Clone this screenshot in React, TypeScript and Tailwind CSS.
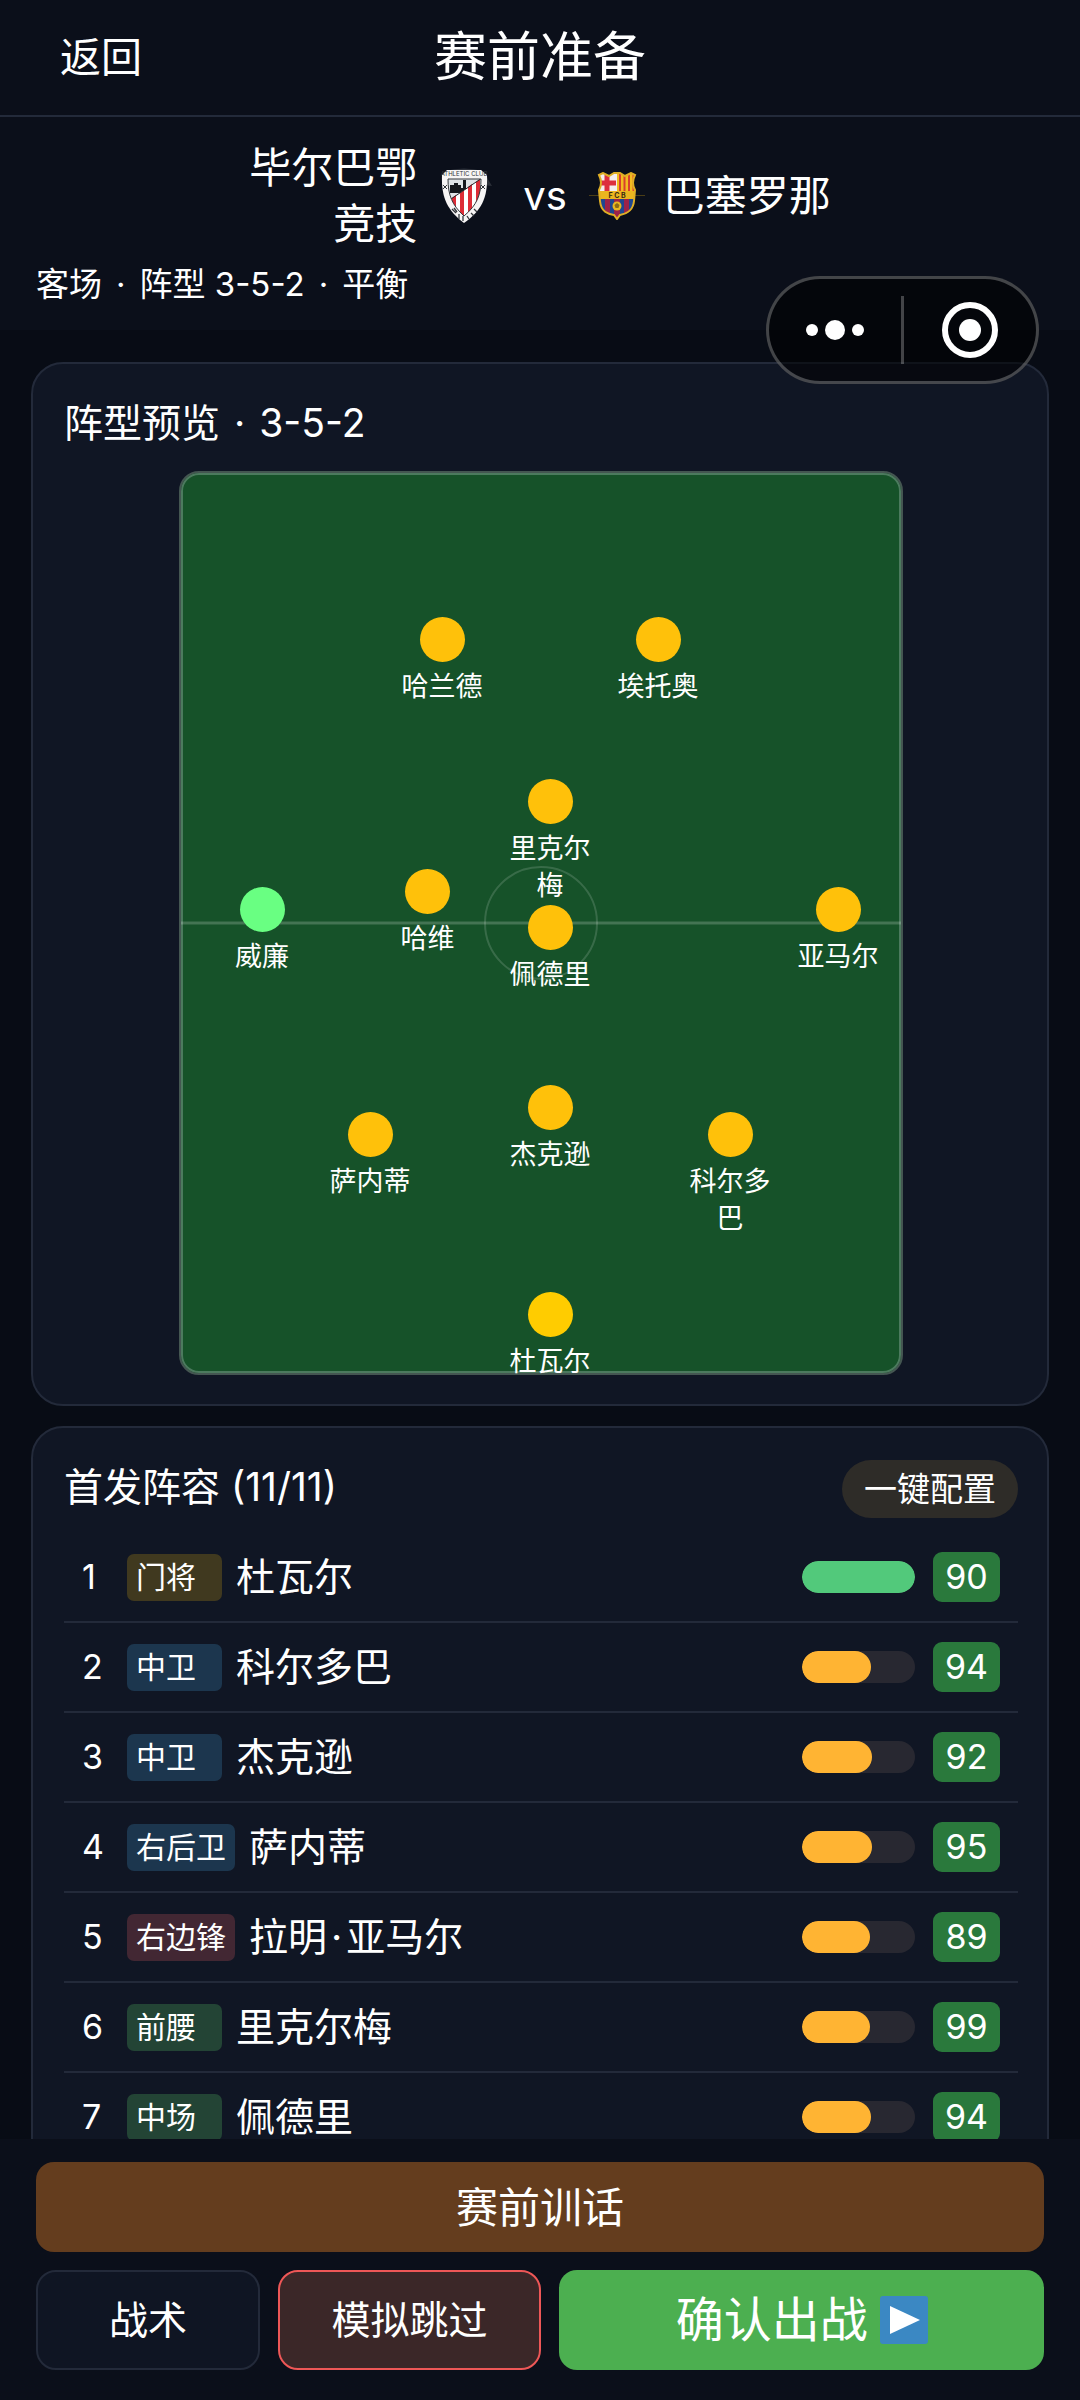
import { Fragment } from "react";

type Position = "gk" | "def" | "fwd" | "mid";

const FONT = "font-['Inter','Noto_Sans_CJK_SC',sans-serif]";

const markers = [
  { name: "哈兰德", x: 35, y: 20, color: "bg-[#ffc10a]" },
  { name: "埃托奥", x: 65, y: 20, color: "bg-[#ffc10a]" },
  { name: "里克尔梅", x: 50, y: 38, color: "bg-[#ffc10a]" },
  { name: "哈维", x: 33, y: 48, color: "bg-[#ffc10a]" },
  { name: "威廉", x: 10, y: 50, color: "bg-[#69ff82]" },
  { name: "亚马尔", x: 90, y: 50, color: "bg-[#ffc10a]" },
  { name: "佩德里", x: 50, y: 52, color: "bg-[#ffc10a]" },
  { name: "杰克逊", x: 50, y: 72, color: "bg-[#ffc10a]" },
  { name: "萨内蒂", x: 25, y: 75, color: "bg-[#ffc10a]" },
  { name: "科尔多巴", x: 75, y: 75, color: "bg-[#ffc10a]" },
  { name: "杜瓦尔", x: 50, y: 95, color: "bg-[#ffcc00]" },
];

const lineup: { pos: string; kind: Position; name: string; energy: number; rating: number }[] = [
  { pos: "门将", kind: "gk", name: "杜瓦尔", energy: 100, rating: 90 },
  { pos: "中卫", kind: "def", name: "科尔多巴", energy: 61, rating: 94 },
  { pos: "中卫", kind: "def", name: "杰克逊", energy: 62, rating: 92 },
  { pos: "右后卫", kind: "def", name: "萨内蒂", energy: 62, rating: 95 },
  { pos: "右边锋", kind: "fwd", name: "拉明·亚马尔", energy: 60, rating: 89 },
  { pos: "前腰", kind: "mid", name: "里克尔梅", energy: 60, rating: 99 },
  { pos: "中场", kind: "mid", name: "佩德里", energy: 61, rating: 94 },
];

const kindColor: Record<Position, string> = {
  gk: "bg-[#40391f]",
  def: "bg-[#1c364e]",
  fwd: "bg-[#422733]",
  mid: "bg-[#234435]",
};

function BilbaoCrest() {
  return (
    <svg viewBox="0 0 54 56" className="h-14 w-[54px] shrink-0" role="img" aria-label="Athletic Club">
      <defs>
        <clipPath id="bilbao-inner">
          <path d="M9 11H42C42 27 38 37 25 48C13 37 9 27 9 11Z" />
        </clipPath>
      </defs>
      <path d="M6 3Q25 -2 44 3L53 18L44 17Z" fill="#2b2f38" />
      <path d="M3 7L8 2H42L48 7C49 30 42 43 25 55C9 43 2 30 3 7Z" fill="#f7f5f5" />
      <g clipPath="url(#bilbao-inner)">
        <rect x="8" y="10" width="36" height="40" fill="#fff" />
        <path d="M8 10H42L10 34Z" fill="#dfe3e6" />
        <path d="M11 25V17H15V15H19V17H22V20H24V12H27V20H31V23L22 25Z" fill="#15181d" />
        <path d="M43 10L9 33L26 50L44 34Z" fill="#fff" />
        <g fill="#dd2c36">
          <path d="M13 30L17 27V44L13 40Z" />
          <path d="M21 25L25 22V50L21 47Z" />
          <path d="M29 19L33 16V46L29 48Z" />
          <path d="M37 14L41 11V40L37 42Z" />
        </g>
        <path d="M43 10L9 33" stroke="#23262b" strokeWidth="1" />
      </g>
      <path d="M9 11H42C42 27 38 37 25 48C13 37 9 27 9 11Z" fill="none" stroke="#33363b" strokeWidth="1" />
      <g stroke="#33363b" strokeWidth="1">
        <path d="M4 17L8 21M8 17L4 21" />
        <path d="M42 17L46 21M46 17L42 21" />
      </g>
      <text x="25" y="8" fontSize="6" textAnchor="middle" fill="#33363b">ATHLETIC CLUB</text>
      <g fill="none" stroke="#33363b" strokeWidth="1.3">
        <path d="M13 41L17 45M15 40L18 44M20 46V51M24 48V53M28 48L30 51M32 45L35 48M35 41L38 44" />
      </g>
    </svg>
  );
}

function BarcelonaCrest() {
  const shield =
    "M10 3L14 1L20 4L25 1L31 1L36 4L42 1L46 3Q42 11 46 18L45 29C44 40 36 42 31 43L28 47L25 43C19 42 12 40 11 29L10 18Q14 11 10 3Z";
  return (
    <svg viewBox="0 0 56 48" className="h-12 w-14 shrink-0" role="img" aria-label="FC Barcelona">
      <defs>
        <clipPath id="barca-shield">
          <path d={shield} />
        </clipPath>
      </defs>
      <path d="M0 23.5H56" stroke="#4a3d16" strokeWidth="1" />
      <g clipPath="url(#barca-shield)">
        <rect x="8" width="40" height="48" fill="#1e4791" />
        <rect x="8" width="20" height="20" fill="#f4eded" />
        <path d="M18 3V19M10 11H27" stroke="#dd2f3d" strokeWidth="5" />
        <rect x="28" width="20" height="20" fill="#f3bb21" />
        <path d="M31 2V19M35.500 2V19M40 2V19M44.500 2V19" stroke="#d8402d" strokeWidth="2" />
        <g fill="#9c2349">
          <rect x="16" y="26" width="5" height="20" />
          <rect x="25" y="26" width="6" height="20" />
          <rect x="35" y="26" width="5" height="20" />
        </g>
        <rect x="8" y="19" width="40" height="8" fill="#eab51f" />
      </g>
      <path d={shield} fill="none" stroke="#dfae25" strokeWidth="2" />
      <circle cx="28" cy="34" r="4.500" fill="#e9b81f" />
      <path d="M28 31L30.500 33L29.500 36H26.500L25.500 33Z" fill="#8d6b16" />
      <text x="28" y="26" fontSize="7" fontWeight="700" textAnchor="middle" fill="#3a2c12">F C B</text>
    </svg>
  );
}

function PlayEmoji() {
  return (
    <svg viewBox="0 0 48 48" className="size-12" aria-hidden="true">
      <rect width="48" height="48" rx="3" fill="#3b88c3" />
      <path d="M10 10L40 24L10 38Z" fill="#fff" />
    </svg>
  );
}

function Capsule() {
  return (
    <div className="absolute top-[276px] right-[41px] z-10 flex h-[108px] w-[273px] items-center rounded-full border-3 border-white/25 bg-black/55">
      <button aria-label="更多" className="flex h-full flex-1 items-center justify-center gap-[7px]">
        <span className="size-3 rounded-full bg-white" />
        <span className="size-5 rounded-full bg-white" />
        <span className="size-3 rounded-full bg-white" />
      </button>
      <span className="h-[68px] w-[3px] bg-white/25" />
      <button aria-label="关闭" className="flex h-full flex-1 items-center justify-center">
        <span className="flex size-14 items-center justify-center rounded-full border-6 border-white">
          <span className="size-[22px] rounded-full bg-white" />
        </span>
      </button>
    </div>
  );
}

function Pitch() {
  return (
    <div className="relative mx-auto aspect-[724/904] w-[724px] max-w-full rounded-[20px] border-2 border-[#445651] bg-[#165229] inset-shadow-[0_0_0_2px_#4c7a5e]">
      <div className="absolute inset-x-0 top-1/2 h-[3px] -translate-y-1/2 bg-white/20" />
      <div className="absolute top-1/2 left-1/2 size-[114px] -translate-x-1/2 -translate-y-1/2 rounded-full border-2 border-white/15" />
      {markers.map((m) => (
        <div
          key={m.name}
          className="absolute flex w-[90px] -translate-x-9 -translate-y-9 flex-col items-center gap-1.5"
          style={{ left: `${m.x}%`, top: `${m.y}%` }}
        >
          <span className={`size-[45px] rounded-full ${m.color}`} />
          <span className="text-center text-[27px] leading-[37px]">{m.name}</span>
        </div>
      ))}
    </div>
  );
}

function PlayerName({ name }: { name: string }) {
  return (
    <span className="flex-1 text-[39px] leading-[58px]">
      {name.split("·").map((part, i) => (
        <Fragment key={part}>
          {i > 0 && <span className="mx-1">·</span>}
          {part}
        </Fragment>
      ))}
    </span>
  );
}

export default function App() {
  return (
    <div className={`relative flex h-screen flex-col overflow-hidden bg-[#080c15] text-white ${FONT}`}>
      <header className="grid shrink-0 grid-cols-[1fr_auto_1fr] items-center border-b-2 border-[#232a3a] bg-[#0b0f1a] px-[60px] py-5">
        <button className="justify-self-start text-[41px] leading-[75px]">返回</button>
        <h1 className="text-[53px] leading-[75px]">赛前准备</h1>
      </header>

      <Capsule />

      <section className="h-[213px] shrink-0 bg-[#0b0f1a] px-9 pt-[23px]">
        <div className="flex items-center justify-center">
          <span className="w-[168px] text-right text-[42px] leading-14">毕尔巴鄂竞技</span>
          <span className="ml-[22px]">
            <BilbaoCrest />
          </span>
          <span className="mr-[22px] ml-[30px] text-[40px] leading-14">vs</span>
          <BarcelonaCrest />
          <span className="ml-[18px] w-[168px] text-[42px] leading-14">巴塞罗那</span>
        </div>
        <p className="mt-2 flex gap-[14px] text-[33px] leading-[48px]">
          <span>客场</span>
          <span>·</span>
          <span>阵型 3-5-2</span>
          <span>·</span>
          <span>平衡</span>
        </p>
      </section>

      <main className="flex min-h-0 flex-1 flex-col gap-5 overflow-y-auto px-[31px] pt-8 [scrollbar-width:none]">
        <section className="shrink-0 rounded-[32px] border-2 border-[#232a3a] bg-[#101624] pt-[30px] pr-[29px] pb-[29px] pl-[31px]">
          <h2 className="mb-[19px] flex gap-[14px] text-[39px] leading-[58px]">
            <span>阵型预览</span>
            <span>·</span>
            <span>3-5-2</span>
          </h2>
          <Pitch />
        </section>

        <section className="shrink-0 rounded-[32px] border-2 border-[#232a3a] bg-[#101624] pt-[30px] pr-[29px] pb-[29px] pl-[31px]">
          <div className="mb-[15px] flex items-baseline justify-between">
            <h2 className="text-[39px] leading-[58px]">首发阵容 (11/11)</h2>
            <button className="rounded-full bg-[#2e2c28] px-[22px] text-[33px] leading-[58px]">一键配置</button>
          </div>
          <ol>
            {lineup.map((p, i) => (
              <li key={p.name} className="flex h-[90px] items-center border-b-2 border-[#232a3a] px-[18px]">
                <span className="w-[45px] text-[34px] leading-[50px]">{i + 1}</span>
                <span
                  className={`mr-[14px] min-w-[95px] rounded-[7px] px-[9px] text-[30px] leading-[47px] ${kindColor[p.kind]}`}
                >
                  {p.pos}
                </span>
                <PlayerName name={p.name} />
                <span className="mr-[18px] h-8 w-[113px] overflow-hidden rounded-full bg-[#282831]">
                  <span
                    className={`block h-full rounded-full ${p.energy > 80 ? "bg-[#52c97b]" : "bg-[#ffb433]"}`}
                    style={{ width: `${p.energy}%` }}
                  />
                </span>
                <span className="w-[67px] rounded-[9px] bg-[#2a793c] text-center text-[34px] leading-[50px]">
                  {p.rating}
                </span>
              </li>
            ))}
          </ol>
        </section>
      </main>

      <footer className="flex shrink-0 flex-col gap-[18px] bg-[#0b0f1a] px-9 pt-[23px] pb-[30px]">
        <button className="h-[90px] w-full rounded-[18px] bg-[#643d1e] text-[42px]">赛前训话</button>
        <div className="grid h-[100px] grid-cols-[224fr_264fr_485fr] gap-[18px]">
          <button className="rounded-[20px] border-2 border-[#232a3a] bg-[#0f1523] text-[39px]">战术</button>
          <button className="rounded-[20px] border-2 border-[#ee5757] bg-[#3b2728] text-[39px]">模拟跳过</button>
          <button className="flex items-center justify-center gap-3 rounded-[18px] bg-[#4caf50] text-[48px]">
            确认出战
            <PlayEmoji />
          </button>
        </div>
      </footer>
    </div>
  );
}
